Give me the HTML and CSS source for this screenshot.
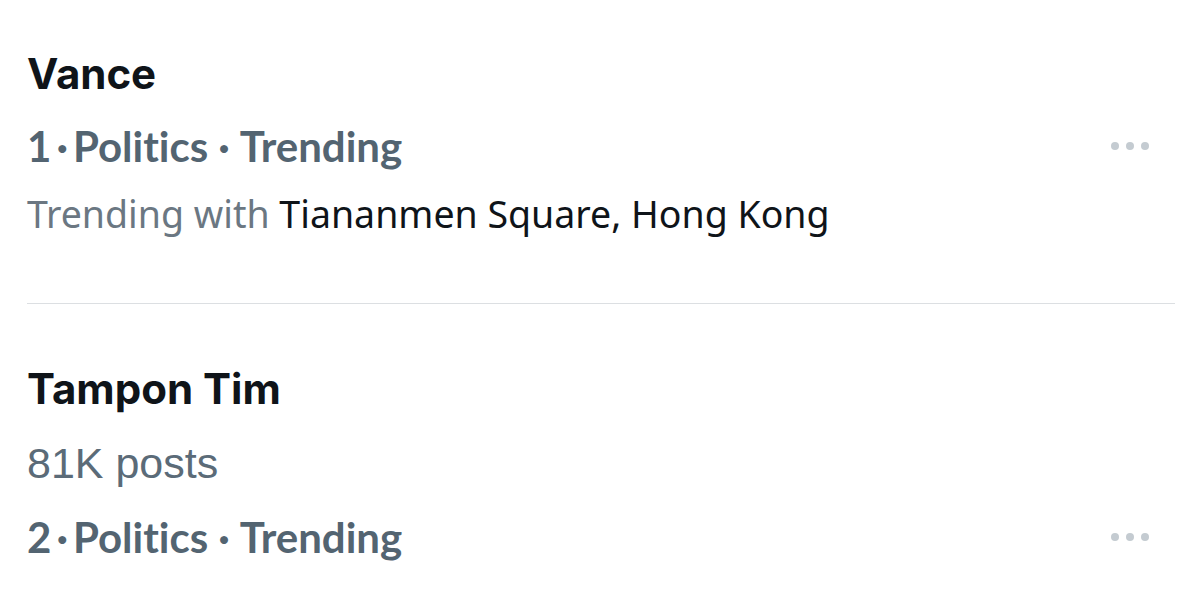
FILE: index.html
```html
<!DOCTYPE html>
<html>
<head>
<meta charset="utf-8">
<link rel="stylesheet" href="styles.css">
</head>
<body>
<div class="feed">
  <section class="trend">
    <div class="title">Vance</div>
    <div class="row">
      <div class="meta">1<span class="dot1">·</span>Politics<span class="dot2">·</span>Trending</div>
      <div class="more"><span></span><span></span><span></span></div>
    </div>
    <div class="with"><span class="gray">Trending with</span> Tiananmen Square, Hong Kong</div>
  </section>
  <div class="divider"></div>
  <section class="trend second">
    <div class="title">Tampon Tim</div>
    <div class="posts">81K posts</div>
    <div class="row">
      <div class="meta">2<span class="dot1">·</span>Politics<span class="dot2">·</span>Trending</div>
      <div class="more"><span></span><span></span><span></span></div>
    </div>
  </section>
</div>
</body>
</html>
```
FILE: styles.css
```css
html, body {
  margin: 0;
  padding: 0;
  background: #ffffff;
}
.feed {
  width: 1200px;
  height: 608px;
  overflow: hidden;
  padding: 0 25px 0 27px;
  box-sizing: border-box;
}
.trend {
  display: flex;
  flex-direction: column;
}
.title {
  font-family: Inter, "Liberation Sans", sans-serif;
  font-weight: 700;
  font-size: 42px;
  line-height: 72px;
  color: #0f1419;
  margin-top: 38px;
  height: 72px;
}
.row {
  display: flex;
  align-items: center;
  justify-content: space-between;
  height: 72px;
}
.meta {
  font-family: Lato, "Liberation Sans", sans-serif;
  font-weight: 700;
  font-size: 42px;
  color: #536471;
  line-height: 72px;
  font-variant-ligatures: none;
}
.dot1 {
  padding: 0 5px;
}
.dot2 {
  padding: 0 10px;
}
.more {
  display: flex;
  gap: 7px;
  margin-right: 26px;
}
.more span {
  width: 8px;
  height: 8px;
  border-radius: 50%;
  background: #c4cbd1;
}
.with {
  font-family: "Noto Sans", sans-serif;
  font-size: 37.5px;
  line-height: 64px;
  color: #0f1419;
}
.gray {
  color: #6b7782;
}
.divider {
  height: 1px;
  background: #dcdfe2;
  margin-top: 57px;
}
.second .title {
  margin-top: 49px;
}
.posts {
  font-family: "Liberation Sans", sans-serif;
  font-size: 43px;
  line-height: 76px;
  color: #5b6b78;
}
```
